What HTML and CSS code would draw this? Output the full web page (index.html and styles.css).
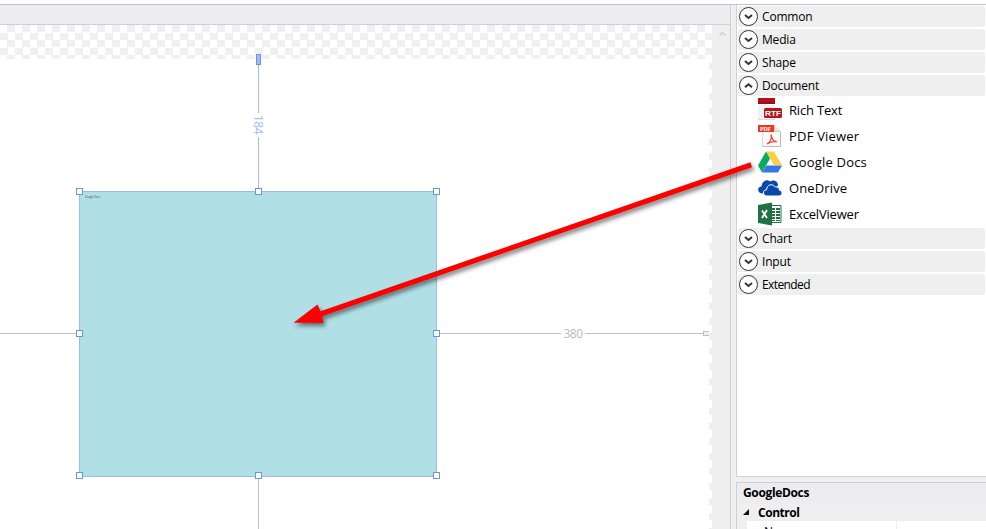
FILE: index.html
```html
<!DOCTYPE html>
<html lang="en">
<head>
<meta charset="utf-8">
<title>Designer</title>
<link rel="stylesheet" href="styles.css">
</head>
<body>
<svg class="defs" width="0" height="0">
  <defs>
    <symbol id="down" viewBox="0 0 19 19"><circle cx="9.5" cy="9.5" r="9" fill="#fff" stroke="#333"/><path d="M6 8l3.5 3L13 8" fill="none" stroke="#333" stroke-width="2"/></symbol>
    <symbol id="up" viewBox="0 0 19 19"><circle cx="9.5" cy="9.5" r="9" fill="#fff" stroke="#333"/><path d="M6 11.2l3.5-3 3.5 3" fill="none" stroke="#333" stroke-width="2"/></symbol>
  </defs>
</svg>
<div class="topbar"></div>
<div class="main">
  <section class="workspace">
    <div class="tabstrip"></div>
    <div class="viewport">
      <div class="canvas">
        <div class="page"></div>
        <div class="guide top"></div>
        <div class="guide left"></div>
        <div class="guide right"></div>
        <div class="guide bottom"></div>
        <div class="anchor active"></div>
        <div class="anchor idle"></div>
        <span class="measure vertical">184</span>
        <span class="measure horizontal">380</span>
        <div class="widget"><span>Google Docs</span></div>
        <i class="handle n1 w1"></i><i class="handle n1 w2"></i><i class="handle n1 w3"></i>
        <i class="handle n2 w1"></i><i class="handle n2 w3"></i>
        <i class="handle n3 w1"></i><i class="handle n3 w2"></i><i class="handle n3 w3"></i>
      </div>
      <div class="scrollbar"><svg width="9" height="6" viewBox="0 0 9 6"><path d="M1.500 4.500l3-3 3 3" fill="none" stroke="#ccc" stroke-width="1.300"/></svg></div>
    </div>
  </section>
  <div class="splitter"></div>
  <aside class="side">
    <div class="toolbox">
      <div class="group"><svg width="19" height="19"><use href="#down"/></svg><span>Common</span></div>
      <div class="group"><svg width="19" height="19"><use href="#down"/></svg><span>Media</span></div>
      <div class="group"><svg width="19" height="19"><use href="#down"/></svg><span>Shape</span></div>
      <div class="group"><svg width="19" height="19"><use href="#up"/></svg><span>Document</span></div>
      <ul class="items">
        <li class="tight"><svg width="24" height="24" viewBox="0 0 24 24"><path d="M0 7h17v15H0z" fill="#f1f1f1"/><path d="M0 0h17v6H0z" fill="#b51218"/><path d="M0 4h17v2H0z" fill="#961015"/><path d="M0 21h17v1H0z" fill="#ddd"/><rect x="6" y="10" width="18" height="10" rx="1.500" fill="#b3161b"/><text x="7" y="18" class="rtf" textLength="16" lengthAdjust="spacingAndGlyphs">RTF</text></svg><span>Rich Text</span></li>
        <li class="loose"><svg width="24" height="24" viewBox="0 0 24 24"><path d="M4.500 1.500h12l6 6v15h-18z" fill="#fafafa" stroke="#ddd"/><path d="M16.500 1.500v6h6" fill="#e5e5e5" stroke="#ccc"/><path d="M5 22.500h17.500V8" fill="none" stroke="#bbb"/><path d="M0 1h16v7H0z" fill="#ec3823"/><text x="2" y="7" class="pdf" textLength="11" lengthAdjust="spacingAndGlyphs">PDF</text><path d="M13 10.500c1 4.500 2 6.500 6 7.500-4-1-7 0-10 2 3-2 5-5.500 4-9.500z" fill="none" stroke="#e84a38" stroke-width="1.200"/></svg><span>PDF Viewer</span></li>
        <li class="loose"><svg width="24" height="24" viewBox="0 0 24 24"><path d="M8 1.500h8l8 13.500h-8z" fill="#ffcf48"/><path d="M8 1.500L0 15.500 4 22.500l8-14z" fill="#0da861"/><path d="M8.200 15.500H24l-4 7H4z" fill="#3777e3"/></svg><span>Google Docs</span></li>
        <li class="onedrive"><svg width="24" height="24" viewBox="0 0 24 24"><path d="M4 17.500c-5-.4-5-7-.5-7C4 5 9 2.500 12 5.500c3-2.500 8-.5 8 3.500 0 1-8 8.500-10 8.500z" fill="#0b48a8"/><path d="M9 20c-4.500 0-5-6-.4-6.300C8.600 8.500 14.500 7 17.300 11c3.200-.5 4.400 1.500 4.200 3.300 3.500.5 3.200 5.700-.5 5.700z" fill="#0b48a8" stroke="#fff"/></svg><span>OneDrive</span></li>
        <li class="tight"><svg width="24" height="24" viewBox="0 0 24 24"><path d="M12 3.500h11v17H12z" fill="#fff" stroke="#207245"/><path d="M14 6h3v2h-3zm4 0h4v2h-4zm-4 3h3v2h-3zm4 0h4v2h-4zm-4 3h3v2h-3zm4 0h4v2h-4zm-4 3h3v2h-3zm4 0h4v2h-4zm-4 3h3v1h-3zm4 0h4v1h-4z" fill="#207245"/><path d="M0 3l14-2.500v23L0 21z" fill="#207245"/><path d="M4 8.500l5 7.500M9 8l-5 8" stroke="#fff" stroke-width="1.800"/></svg><span>ExcelViewer</span></li>
      </ul>
      <div class="group"><svg width="19" height="19"><use href="#down"/></svg><span>Chart</span></div>
      <div class="group"><svg width="19" height="19"><use href="#down"/></svg><span>Input</span></div>
      <div class="group"><svg width="19" height="19"><use href="#down"/></svg><span class="extended">Extended</span></div>
    </div>
    <div class="properties">
      <div class="title">GoogleDocs</div>
      <div class="category"><svg width="6" height="6"><path d="M6 0v6H0z" fill="#111"/></svg><span>Control</span></div>
      <div class="row"><span class="key">Name</span><span class="value"></span></div>
    </div>
  </aside>
</div>
<svg class="arrow" width="986" height="529" viewBox="0 0 986 529"><path d="M750.500 162.300l1.500 4.900L322 316.200l1.500 6.900L293.500 322.700 317.500 304.500 320.500 311.300z" fill="#fe0000"/></svg>
</body>
</html>
```
FILE: styles.css
```css
* { box-sizing: border-box; }
body { margin: 0; width: 986px; height: 529px; overflow: hidden; display: flex; flex-direction: column; background: #fff; color: #000; font: 12px "Open Sans", "Noto Sans", sans-serif; }
.defs { position: absolute; }
.topbar { flex: none; height: 5px; border-bottom: 1px solid #b4c6dc; }
.main { flex: 1; min-height: 0; display: flex; }
.workspace { width: 730px; display: flex; flex-direction: column; }
.tabstrip { height: 20px; background: #edecf1; border-bottom: 1px solid #d0d0d0; }
.viewport { flex: 1; display: flex; }
.canvas { position: relative; width: 713px; overflow: hidden; background: repeating-conic-gradient(#f0f0f0 0 25%, #fff 0 50%) 0 0 / 15px 15px; }
.page { position: absolute; left: 0; top: 34px; width: 709px; height: 480px; background: #fff; }
.scrollbar { width: 17px; padding-top: 6px; padding-left: 5px; background: #efefef; }
.scrollbar svg { display: block; }
.guide { position: absolute; background: #c0c0c0; }
.guide.top { left: 258px; top: 39px; width: 1px; height: 128px; background: #9fbaf4; }
.guide.bottom { left: 258px; top: 450px; width: 1px; height: 60px; }
.guide.left { left: 0; top: 308px; width: 80px; height: 1px; }
.guide.right { left: 437px; top: 308px; width: 267px; height: 1px; }
.anchor { position: absolute; }
.anchor.active { left: 256px; top: 29px; width: 5px; height: 11px; background: #9fbaf4; border: 1px solid #6495ed; }
.anchor.idle { left: 703px; top: 306px; width: 6px; height: 5px; background: #f0f0f0; border: 1px solid #c0c0c0; border-right: 0; }
.measure { position: absolute; background: #fff; text-align: center; color: #bababa; font-size: 12px; letter-spacing: -.5px; }
.measure.vertical { left: 250px; top: 88px; width: 16px; height: 24px; line-height: 16px; writing-mode: vertical-rl; color: #9fbaf4; }
.measure.horizontal { left: 561px; top: 300px; width: 24px; height: 17px; line-height: 17px; }
.widget { position: absolute; left: 79px; top: 166px; width: 358px; height: 286px; background: #b0e0e6; border: 1px solid #9fb9ee; }
.widget span { display: block; margin: 3px 0 0 5px; color: #345; font-size: 2.600px; line-height: 4px; }
.handle { position: absolute; width: 7px; height: 7px; background: #fff; border: 1px solid #6495ed; }
.n1 { top: 163px; } .n2 { top: 305px; } .n3 { top: 447px; }
.w1 { left: 76px; } .w2 { left: 255px; } .w3 { left: 433px; }
.splitter { width: 6px; background: #efefef; border-left: 1px solid #d0d0d0; }
.side { width: 250px; display: flex; flex-direction: column; background: #efefef; }
.toolbox { height: 472px; padding: 1px 1px 0; border: 1px solid #d0d0d0; border-top: 0; border-right: 0; background: #fff; }
.group { height: 21px; margin-bottom: 2px; display: flex; align-items: center; gap: 4px; padding-left: 1px; border-radius: 2px; background: #efefef; }
.group svg { flex: none; }
.group span { line-height: 20px; letter-spacing: -.18px; }
.group .extended { letter-spacing: -.6px; }
.items { list-style: none; margin: -1px 0 1px; padding: 0; }
.items li { height: 26px; display: flex; align-items: center; gap: 7px; padding-left: 20px; font-size: 13px; line-height: 26px; }
.items .tight { letter-spacing: -.18px; }
.items .loose { letter-spacing: .2px; }
.items .onedrive { letter-spacing: .12px; }
.rtf, .pdf { letter-spacing: 0; }
.rtf { fill: #fff; font: bold 8px "Liberation Sans", sans-serif; }
.pdf { fill: #fff; font: bold 6px "Liberation Serif", serif; }
.properties { flex: 1; margin-top: 5px; overflow: hidden; border: 1px solid #d0d0d0; border-width: 1px 0 0 1px; }
.title { height: 21px; padding-left: 6px; background: #edecf1; font-weight: 700; letter-spacing: -.35px; line-height: 20px; }
.category { height: 17px; display: flex; align-items: center; gap: 9px; padding-left: 6px; font-weight: 700; letter-spacing: -.45px; line-height: 17px; }
.category svg { margin-top: -2px; }
.row { display: flex; height: 22px; margin-left: 10px; background: #fff; }
.key { width: 150px; padding-left: 17px; border-right: 1px solid #efefef; line-height: 22px; }
.arrow { position: absolute; left: 0; top: 0; filter: drop-shadow(2px 3px 2px rgba(0, 0, 0, .5)); }
```
